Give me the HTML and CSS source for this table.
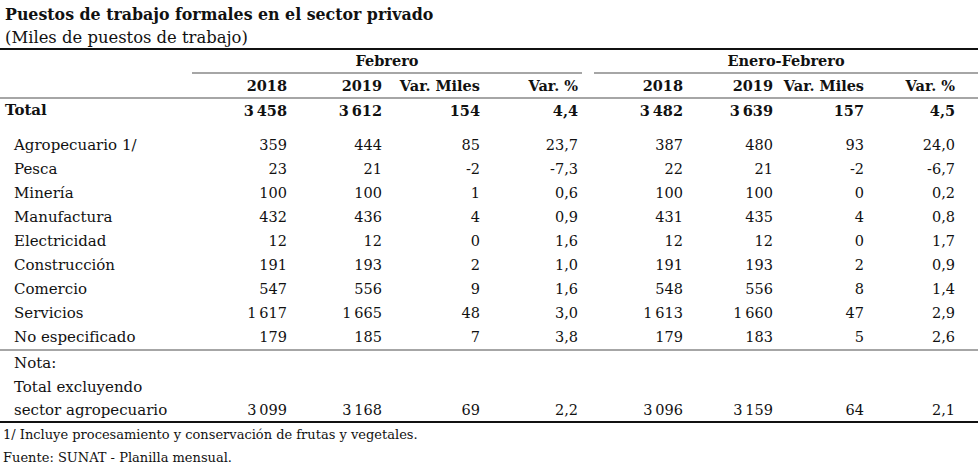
FILE: index.html
```html
<!DOCTYPE html>
<html lang="es">
<head>
<meta charset="utf-8">
<link rel="stylesheet" href="styles.css">
</head>
<body>
<div class="page">
  <h1 class="title">Puestos de trabajo formales en el sector privado</h1>
  <p class="subtitle">(Miles de puestos de trabajo)</p>
  <table class="tbl">
    <colgroup>
      <col class="c-label"><col class="c-a"><col class="c-a"><col class="c-b"><col class="c-b4">
      <col class="c-gap">
      <col class="c-c"><col class="c-d"><col class="c-e"><col class="c-e8">
    </colgroup>
    <thead>
      <tr class="r-group">
        <th></th>
        <th colspan="4"><div class="grp">Febrero</div></th>
        <th></th>
        <th colspan="4"><div class="grp grp-r">Enero-Febrero</div></th>
      </tr>
      <tr class="r-head">
        <th></th>
        <th class="num">2018</th><th class="num">2019</th><th class="num">Var. Miles</th><th class="num p4">Var. %</th>
        <th></th>
        <th class="num">2018</th><th class="num">2019</th><th class="num">Var. Miles</th><th class="num p8">Var. %</th>
      </tr>
    </thead>
    <tbody class="b-total">
      <tr class="r-total">
        <td class="lbl">Total</td>
        <td class="num">3&#8201;458</td><td class="num">3&#8201;612</td><td class="num">154</td><td class="num p4">4,4</td>
        <td></td>
        <td class="num">3&#8201;482</td><td class="num">3&#8201;639</td><td class="num">157</td><td class="num p8">4,5</td>
      </tr>
      <tr class="r-spacer"><td colspan="10"></td></tr>
    </tbody>
    <tbody class="b-body">
      <tr><td class="lbl sub">Agropecuario 1/</td><td class="num">359</td><td class="num">444</td><td class="num">85</td><td class="num p4">23,7</td><td></td><td class="num">387</td><td class="num">480</td><td class="num">93</td><td class="num p8">24,0</td></tr>
      <tr><td class="lbl sub">Pesca</td><td class="num">23</td><td class="num">21</td><td class="num">-2</td><td class="num p4">-7,3</td><td></td><td class="num">22</td><td class="num">21</td><td class="num">-2</td><td class="num p8">-6,7</td></tr>
      <tr><td class="lbl sub">Minería</td><td class="num">100</td><td class="num">100</td><td class="num">1</td><td class="num p4">0,6</td><td></td><td class="num">100</td><td class="num">100</td><td class="num">0</td><td class="num p8">0,2</td></tr>
      <tr><td class="lbl sub">Manufactura</td><td class="num">432</td><td class="num">436</td><td class="num">4</td><td class="num p4">0,9</td><td></td><td class="num">431</td><td class="num">435</td><td class="num">4</td><td class="num p8">0,8</td></tr>
      <tr><td class="lbl sub">Electricidad</td><td class="num">12</td><td class="num">12</td><td class="num">0</td><td class="num p4">1,6</td><td></td><td class="num">12</td><td class="num">12</td><td class="num">0</td><td class="num p8">1,7</td></tr>
      <tr><td class="lbl sub">Construcción</td><td class="num">191</td><td class="num">193</td><td class="num">2</td><td class="num p4">1,0</td><td></td><td class="num">191</td><td class="num">193</td><td class="num">2</td><td class="num p8">0,9</td></tr>
      <tr><td class="lbl sub">Comercio</td><td class="num">547</td><td class="num">556</td><td class="num">9</td><td class="num p4">1,6</td><td></td><td class="num">548</td><td class="num">556</td><td class="num">8</td><td class="num p8">1,4</td></tr>
      <tr><td class="lbl sub">Servicios</td><td class="num">1&#8201;617</td><td class="num">1&#8201;665</td><td class="num">48</td><td class="num p4">3,0</td><td></td><td class="num">1&#8201;613</td><td class="num">1&#8201;660</td><td class="num">47</td><td class="num p8">2,9</td></tr>
      <tr><td class="lbl sub">No especificado</td><td class="num">179</td><td class="num">185</td><td class="num">7</td><td class="num p4">3,8</td><td></td><td class="num">179</td><td class="num">183</td><td class="num">5</td><td class="num p8">2,6</td></tr>
    </tbody>
    <tbody class="b-note">
      <tr class="r-note"><td class="lbl sub" colspan="10">Nota:</td></tr>
      <tr class="r-note"><td class="lbl sub" colspan="10">Total excluyendo</td></tr>
      <tr class="r-last"><td class="lbl sub">sector agropecuario</td><td class="num">3&#8201;099</td><td class="num">3&#8201;168</td><td class="num">69</td><td class="num p4">2,2</td><td></td><td class="num">3&#8201;096</td><td class="num">3&#8201;159</td><td class="num">64</td><td class="num p8">2,1</td></tr>
    </tbody>
  </table>
  <p class="foot">1/ Incluye procesamiento y conservación de frutas y vegetales.</p>
  <p class="foot">Fuente: SUNAT - Planilla mensual.</p>
</div>
</body>
</html>
```

FILE: styles.css
```css
html, body {
  margin: 0;
  padding: 0;
  background: #ffffff;
}
.page {
  width: 980px;
  font-family: "DejaVu Serif", "Liberation Serif", serif;
  color: #111111;
}
.title {
  margin: 0;
  padding: 3px 0 0 5px;
  font-size: 15.8px;
  line-height: 23px;
  height: 22px;
  font-weight: bold;
}
.subtitle {
  margin: 0;
  padding: 1px 0 0 5px;
  font-size: 16.4px;
  line-height: 23px;
  height: 22px;
}
.tbl {
  width: 978px;
  border-collapse: collapse;
  table-layout: fixed;
  border-top: 2px solid #111111;
  border-bottom: 2px solid #111111;
  font-size: 14.5px;
}
.c-label { width: 192px; }
.c-a { width: 95px; }
.c-b { width: 98px; }
.c-b4 { width: 102px; }
.c-gap { width: 12px; }
.c-c { width: 89px; }
.c-d { width: 90px; }
.c-e { width: 91px; }
.c-e8 { width: 114px; }
th, td {
  padding: 0;
  white-space: nowrap;
}
th {
  font-weight: bold;
}
.num {
  text-align: right;
}
.p4 { padding-right: 4px; }
.p8 { padding-right: 23px; }
.r-group th {
  height: 24px;
  padding: 0;
  vertical-align: top;
}
.grp {
  height: 22px;
  line-height: 22px;
  text-align: center;
  border-bottom: 2px solid #a6a6a6;
}
.r-head th {
  height: 23px;
  line-height: 23px;
  border-bottom: 2px solid #a6a6a6;
}
.r-total td {
  height: 23px;
  line-height: 23px;
  font-weight: bold;
}
.lbl {
  text-align: left;
  padding-left: 5px;
  font-size: 15px;
}
.lbl.sub {
  padding-left: 14px;
}
.r-spacer td {
  height: 11px;
}
.b-body tr td {
  height: 24px;
  line-height: 24px;
}
.b-body tr:last-child td {
  border-bottom: 2px solid #a6a6a6;
}
.r-note td {
  height: 24px;
  line-height: 24px;
}
.r-last td {
  height: 22px;
  line-height: 22px;
  vertical-align: top;
}
.foot {
  margin: 0;
  padding-left: 3px;
  font-size: 13px;
  line-height: 23px;
}
.foot:first-of-type {
  padding-top: 3px;
}
```
